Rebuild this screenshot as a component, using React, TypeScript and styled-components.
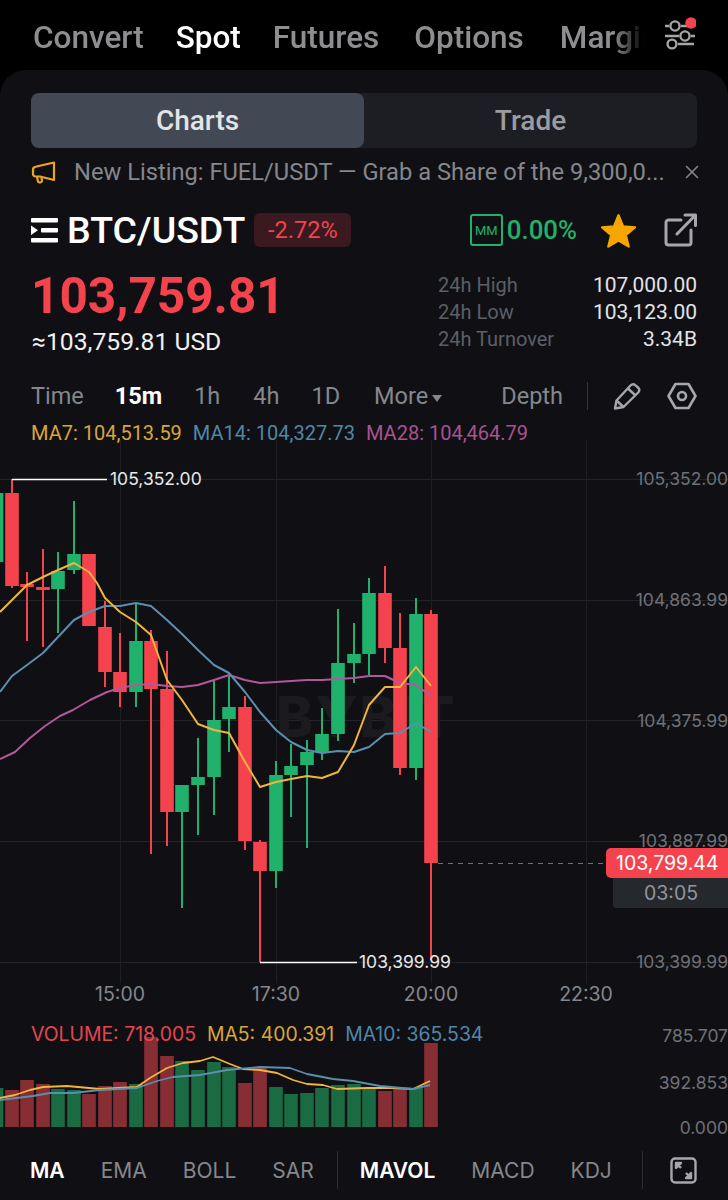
import React from 'react'
import styled, { createGlobalStyle } from 'styled-components'
import { X } from 'lucide-react'

const GlobalStyle = createGlobalStyle`
  html, body {
    margin: 0;
    background: #000;
  }
  * {
    box-sizing: border-box;
  }
`

const UI_FONT = `Roboto, "Liberation Sans", sans-serif`
const CHART_FONT = `Inter, "Liberation Sans", sans-serif`

const Page = styled.div`
  width: 728px;
  height: 1200px;
  overflow: hidden;
  display: flex;
  flex-direction: column;
  background: #000;
  font-family: ${UI_FONT};
`

const TopNav = styled.nav`
  height: 70px;
  flex: none;
  display: flex;
  align-items: center;
  padding: 5px 32px 0 33px;
`

const NavTabs = styled.div`
  width: 611px;
  display: flex;
  overflow: hidden;
  -webkit-mask-image: linear-gradient(to right, #000 95%, transparent 100%);
  mask-image: linear-gradient(to right, #000 95%, transparent 100%);
`

const NavTab = styled.span<{ $active?: boolean; $gap?: number }>`
  flex: none;
  margin-right: ${({ $gap }) => $gap ?? 0}px;
  font-size: 31.5px;
  font-weight: 500;
  line-height: 40px;
  color: ${({ $active }) => ($active ? '#fff' : '#8e8e90')};
`

const NavIcon = styled.svg`
  flex: none;
  margin-left: auto;
  margin-top: -5px;
`

const Card = styled.main`
  flex: 1;
  display: flex;
  flex-direction: column;
  padding: 23px 31px 0;
  background: #101014;
  border-radius: 26px 26px 0 0;
  overflow: hidden;
`

const Segment = styled.div`
  height: 55px;
  flex: none;
  display: grid;
  grid-template-columns: 333px 1fr;
  background: #1c1e23;
  border-radius: 8px;
`

const SegmentItem = styled.div<{ $active?: boolean }>`
  display: flex;
  align-items: center;
  justify-content: center;
  font-size: 28px;
  font-weight: 500;
  border-radius: 8px;
  color: ${({ $active }) => ($active ? '#e2e4e8' : '#9a9ca1')};
  background: ${({ $active }) => ($active ? '#424954' : 'transparent')};
`

const Notice = styled.div`
  height: 48px;
  flex: none;
  display: flex;
  align-items: center;
  font-size: 23.7px;
  color: #85878c;
  svg {
    flex: none;
  }
`

const NoticeText = styled.span`
  margin-left: 18px;
  flex: 1;
  white-space: nowrap;
  overflow: hidden;
`

const CloseIcon = styled(X)`
  margin-right: -6px;
`

const PairRow = styled.div`
  height: 68px;
  flex: none;
  display: flex;
  align-items: center;
`

const PairName = styled.span`
  margin-left: 9px;
  font-size: 37.5px;
  font-weight: 500;
  color: #fff;
`

const ChangeBadge = styled.span`
  margin-left: 9px;
  height: 34px;
  width: 97px;
  display: flex;
  align-items: center;
  justify-content: center;
  font-size: 23.5px;
  color: #ef4450;
  background: #3a1a20;
  border-radius: 6px;
`

const MmBadge = styled.span`
  margin-left: auto;
  width: 33px;
  height: 32px;
  display: flex;
  align-items: center;
  justify-content: center;
  font-size: 13px;
  color: #20b26c;
  border: 2px solid #20b26c;
  border-radius: 3px;
`

const MmRate = styled.span`
  margin-left: 4px;
  font-size: 25.8px;
  font-weight: 500;
  color: #20b26c;
`

const StarIcon = styled.svg`
  margin-left: 23px;
  flex: none;
`

const ShareIcon = styled.svg`
  margin-left: 27px;
  flex: none;
`

const PriceRow = styled.div`
  height: 112px;
  flex: none;
  display: flex;
  justify-content: space-between;
`

const PriceBlock = styled.div`
  display: flex;
  flex-direction: column;
`

const LastPrice = styled.span`
  margin-top: 5px;
  font-size: 49.5px;
  line-height: 54px;
  font-weight: 700;
  color: #f5434e;
`

const FiatPrice = styled.span`
  margin-top: 4px;
  margin-left: 1px;
  font-size: 24.7px;
  line-height: 30px;
  color: #f0f0f2;
`

const Stats = styled.dl`
  width: 259px;
  margin: 7px 0 0;
  display: grid;
  grid-template-columns: auto auto;
  justify-content: space-between;
  grid-auto-rows: 27px;
  align-items: center;
  dt {
    font-size: 20px;
    color: #5c5f66;
  }
  dd {
    margin: 0;
    font-size: 21px;
    text-align: right;
    color: #e2e3e6;
  }
`

const Toolbar = styled.div`
  height: 40px;
  flex: none;
  display: flex;
  align-items: center;
  font-size: 23.5px;
  color: #85878c;
`

const Interval = styled.span<{ $active?: boolean; $gap?: number }>`
  margin-right: ${({ $gap }) => $gap ?? 0}px;
  color: ${({ $active }) => ($active ? '#fff' : '#85878c')};
  font-weight: ${({ $active }) => ($active ? 700 : 400)};
`

const DepthLabel = styled(Interval)`
  margin-left: auto;
`

const Caret = styled.span`
  display: inline-block;
  width: 0;
  height: 0;
  margin-left: 4px;
  vertical-align: 2px;
  border-left: 5px solid transparent;
  border-right: 5px solid transparent;
  border-top: 7px solid #85878c;
`

const ToolDivider = styled.span`
  width: 1px;
  height: 28px;
  margin: 0 25px 0 24px;
  background: #34363b;
`

const ToolIcon = styled.svg`
  flex: none;
`

const HexIcon = styled.svg`
  flex: none;
  margin-left: 26px;
`

const MaLegend = styled.div`
  height: 24px;
  flex: none;
  display: flex;
  align-items: center;
  gap: 11px;
  padding-top: 10px;
  font-family: ${UI_FONT};
  font-size: 20px;
`

const LegendItem = styled.span<{ $color: string }>`
  white-space: nowrap;
  color: ${({ $color }) => $color};
`

const ChartArea = styled.section`
  position: relative;
  height: 700px;
  flex: none;
  margin: 0 -31px;
  font-family: ${CHART_FONT};
`

const ChartSvg = styled.svg`
  display: block;
`

const Watermark = styled.text`
  font-family: ${CHART_FONT};
  font-size: 56px;
  font-weight: 800;
  letter-spacing: 2px;
  fill: #1a1a1f;
`

// page y minus the chart's top edge
const CHART_TOP = 440

const AxisLabel = styled.span<{ $y: number }>`
  position: absolute;
  right: 0;
  top: ${({ $y }) => $y - CHART_TOP - 11}px;
  font-size: 17.5px;
  line-height: 22px;
  color: #6f7177;
`

const MarkLabel = styled.span<{ $x: number; $y: number }>`
  position: absolute;
  left: ${({ $x }) => $x}px;
  top: ${({ $y }) => $y - CHART_TOP - 11}px;
  font-size: 17.5px;
  line-height: 22px;
  color: #e8e8ea;
`

const TimeLabel = styled.span<{ $x: number }>`
  position: absolute;
  left: ${({ $x }) => $x - 40}px;
  top: ${994 - CHART_TOP - 11}px;
  width: 80px;
  text-align: center;
  font-size: 19.5px;
  line-height: 22px;
  color: #85878c;
`

const PriceTag = styled.div`
  position: absolute;
  right: 0;
  top: ${848 - CHART_TOP}px;
  width: 122px;
  height: 30px;
  display: flex;
  align-items: center;
  padding-left: 10px;
  font-size: 19.5px;
  color: #fff;
  background: #f5434e;
  border-radius: 5px 0 0 5px;
`

const Countdown = styled.div`
  position: absolute;
  right: 0;
  top: ${878 - CHART_TOP}px;
  width: 115px;
  height: 30px;
  display: flex;
  align-items: center;
  padding-left: 31px;
  font-size: 19.5px;
  color: #93959a;
  background: #25282d;
  border-radius: 0 0 0 4px;
`

const VolumeLegend = styled.div`
  position: absolute;
  left: 31px;
  top: ${1034 - CHART_TOP - 11}px;
  display: flex;
  gap: 11px;
  font-size: 19.4px;
  line-height: 22px;
`

const BottomTabs = styled.div`
  height: 60px;
  flex: none;
  display: flex;
  align-items: center;
  margin: 0 -1px;
  font-family: ${CHART_FONT};
  font-size: 21px;
`

const BottomTab = styled.span<{ $active?: boolean }>`
  flex: none;
  margin-right: 36px;
  color: ${({ $active }) => ($active ? '#fff' : '#85878c')};
  font-weight: ${({ $active }) => ($active ? 600 : 400)};
`

const TabDivider = styled.span<{ $left: number }>`
  flex: none;
  width: 1px;
  height: 38px;
  margin: 0 22px 0 ${({ $left }) => $left}px;
  background: #2a2c31;
`

const ExpandIcon = styled.svg`
  flex: none;
  margin-left: 5px;
`

const GREEN = '#20b26c'
const RED = '#f5434e'

// x, wick top, body top, body bottom, wick bottom, side (page coordinates)
const candles: [number, number, number, number, number, 'g' | 'r'][] = [
  [-3.5, 493, 493, 562, 562, 'g'],
  [12, 479, 493, 586, 588, 'r'],
  [27, 572, 584, 587, 641, 'r'],
  [43, 549, 587, 590, 647, 'r'],
  [58, 552, 571, 589, 633, 'g'],
  [74, 501, 554, 570, 574, 'g'],
  [89, 554, 554, 626, 626, 'r'],
  [105, 601, 627, 672, 687, 'r'],
  [120, 633, 672, 692, 707, 'r'],
  [136, 603, 641, 692, 707, 'g'],
  [151, 630, 641, 689, 854, 'r'],
  [167, 651, 689, 812, 846, 'r'],
  [182, 785, 785, 812, 908, 'g'],
  [198, 738, 777, 785, 835, 'g'],
  [214, 680, 720, 777, 815, 'g'],
  [229, 675, 707, 719, 752, 'g'],
  [245, 696, 707, 841, 850, 'r'],
  [260, 840, 842, 871, 962, 'r'],
  [276, 761, 775, 871, 888, 'g'],
  [291, 744, 766, 775, 817, 'g'],
  [307, 740, 752, 765, 848, 'g'],
  [322, 708, 734, 752, 760, 'g'],
  [338, 609, 663, 734, 741, 'g'],
  [354, 623, 654, 663, 683, 'g'],
  [369, 578, 593, 654, 675, 'g'],
  [385, 566, 593, 648, 663, 'r'],
  [400, 613, 648, 768, 775, 'r'],
  [416, 598, 614, 768, 780, 'g'],
  [431, 610, 614, 863, 960, 'r'],
]

const ma7 = '0,612 27,585 43,577 58,570 74,563 89,572 97,583 105,598 120,612 136,622 151,635 167,680 182,700 198,724 214,730 229,733 245,762 260,787 276,782 291,779 307,776 322,778 338,772 354,745 369,705 385,687 400,687 416,667 431,686'
const ma14 = '0,692 12,676 27,665 43,653 58,637 74,620 89,612 105,606 120,606 136,603 151,606 167,620 182,634 198,650 214,665 229,673 245,692 260,712 276,730 291,742 307,750 322,753 338,751 354,752 369,747 385,734 400,733 416,723 431,732'
const ma28 = '0,759 15,752 30,738 45,726 60,716 73,710 90,700 107,692 120,688 136,685 151,684 167,686 182,687 198,685 214,680 229,675 245,680 260,683 276,682 291,681 307,680 322,680 338,679 354,678 369,676 385,676 400,683 416,685 431,696'

// x, top of bar, side
const volumes: [number, number, 'g' | 'r'][] = [
  [-3.5, 1088, 'g'], [12, 1090, 'r'], [27, 1080, 'r'], [43, 1084, 'r'], [58, 1089, 'g'],
  [74, 1090, 'g'], [89, 1094, 'r'], [105, 1086, 'r'], [120, 1082, 'r'], [136, 1084, 'g'],
  [151, 1037, 'r'], [167, 1056, 'r'], [182, 1061, 'g'], [198, 1070, 'g'], [214, 1062, 'g'],
  [229, 1067, 'g'], [245, 1083, 'r'], [260, 1068, 'r'], [276, 1087, 'g'], [291, 1094, 'g'],
  [307, 1093, 'g'], [322, 1088, 'g'], [338, 1085, 'g'], [354, 1084, 'g'], [369, 1089, 'g'],
  [385, 1091, 'r'], [400, 1088, 'r'], [416, 1088, 'g'], [431, 1043, 'r'],
]

const volMa5 = '0,1098 15,1095 30,1090 43,1087 67,1086 100,1089 137,1087 150,1078 167,1068 183,1063 200,1061 213,1057 230,1064 243,1069 260,1070 277,1073 293,1080 307,1084 323,1085 337,1089 367,1088 393,1088 413,1089 430,1081'
const volMa10 = '0,1100 33,1096 50,1093 73,1093 100,1090 137,1088 157,1081 173,1077 200,1075 227,1070 260,1067 290,1068 307,1074 333,1079 353,1081 380,1086 413,1089 430,1085'

const gridY = [479, 600, 720, 841, 962]
const gridX = [120, 276, 431, 586]

const Candle = ({ c }: { c: (typeof candles)[number] }) => {
  const [x, hi, top, bottom, lo, side] = c
  const color = side === 'g' ? GREEN : RED
  return (
    <g fill={color}>
      <rect x={x - 1} y={hi} width={2} height={lo - hi} />
      <rect x={x - 6.8} y={top} width={13.6} height={bottom - top} />
    </g>
  )
}

const Chart = () => (
  <ChartSvg width={728} height={700} viewBox={`0 ${CHART_TOP} 728 700`}>
    {gridY.map(y => (
      <line key={y} x1={0} x2={728} y1={y + 0.5} y2={y + 0.5} stroke="#232428" />
    ))}
    {gridX.map(x => (
      <line key={x} x1={x + 0.5} x2={x + 0.5} y1={440} y2={983} stroke="#1f2024" />
    ))}
    <Watermark x={276} y={737}>BYBIT</Watermark>
    {candles.map(c => (
      <Candle key={c[0]} c={c} />
    ))}
    <g fill="none" strokeWidth={2} strokeLinejoin="round">
      <polyline points={ma28} stroke="#b3579b" />
      <polyline points={ma14} stroke="#5b8fae" />
      <polyline points={ma7} stroke="#f0b53c" />
    </g>
    <path d="M12 479.5H107M260 962.5H357" stroke="#fff" strokeWidth={1.6} fill="none" />
    <line x1={438} x2={606} y1={863.5} y2={863.5} stroke="#6f7177" strokeDasharray="5 5" />
    {volumes.map(([x, top, side]) => (
      <rect key={x} x={x - 6.8} y={top} width={13.6} height={1127 - top} fill={side === 'g' ? '#1a6a44' : '#872e35'} />
    ))}
    <g fill="none" strokeWidth={1.8} strokeLinejoin="round">
      <polyline points={volMa5} stroke="#f0b53c" />
      <polyline points={volMa10} stroke="#5b8fae" />
    </g>
  </ChartSvg>
)

const App: React.FC = () => (
  <Page>
    <GlobalStyle />
    <TopNav>
      <NavTabs>
        <NavTab $gap={32}>Convert</NavTab>
        <NavTab $active $gap={32}>Spot</NavTab>
        <NavTab $gap={35}>Futures</NavTab>
        <NavTab $gap={36}>Options</NavTab>
        <NavTab>Margin</NavTab>
      </NavTabs>
      <NavIcon width={34} height={38} viewBox="662 16 34 38" fill="none" stroke="#a5a5a7" strokeWidth={2.4}>
        <path d="M665 26h4M681 26h10M665 36h14M691 36h4M678 44h16" />
        <circle cx={675} cy={26} r={4.6} />
        <circle cx={685} cy={36} r={4.6} />
        <circle cx={672} cy={44} r={4.4} />
        <circle cx={691} cy={23} r={5.8} fill="#f5434e" stroke="none" />
      </NavIcon>
    </TopNav>
    <Card>
      <Segment>
        <SegmentItem $active>Charts</SegmentItem>
        <SegmentItem>Trade</SegmentItem>
      </Segment>
      <Notice>
        <svg width={25} height={25} viewBox="0 0 25 25" fill="none" stroke="#eda51e" strokeWidth={2.2} strokeLinejoin="round">
          <path d="M23 2.500v17.500L9 16.500H4.500c-1.500 0-2.500-1-2.500-2.500V9.500C2 8 3 7 4.500 6.800z" />
          <path d="M6 16.500l1 5c.3 1.500 4.500 1 4-1l-.6-3" />
        </svg>
        <NoticeText>New Listing: FUEL/USDT — Grab a Share of the 9,300,0...</NoticeText>
        <CloseIcon size={22} color="#85878c" strokeWidth={1.7} />
      </Notice>
      <PairRow>
        <svg width={27} height={27} viewBox="0 0 27 27" fill="#fff">
          <rect y={1} width={27} height={4.5} rx={1} />
          <rect x={10} y={11} width={17} height={4.5} rx={1} />
          <rect y={21} width={27} height={4.5} rx={1} />
          <path d="M0 8.500l7 4.800-7 4.800z" />
        </svg>
        <PairName>BTC/USDT</PairName>
        <ChangeBadge>-2.72%</ChangeBadge>
        <MmBadge>MM</MmBadge>
        <MmRate>0.00%</MmRate>
        <StarIcon width={37} height={35} viewBox="0 0 24 23" fill="#f7a600" stroke="#f7a600" strokeWidth={1.5} strokeLinejoin="round">
          <path d="M12 1.500l3 7.300 7.800.6-6 5.100 1.900 7.600L12 18.100l-6.700 4 1.900-7.600-6-5.100L9 8.800z" />
        </StarIcon>
        <ShareIcon width={33} height={34} viewBox="0 0 33 34" fill="none" stroke="#a5a7ac" strokeWidth={3} strokeLinecap="round" strokeLinejoin="round">
          <path d="M17 7H4.500A2.500 2.500 0 0 0 2 9.500v20A2.500 2.500 0 0 0 4.500 32h20a2.500 2.500 0 0 0 2.500-2.500V17" />
          <path d="M13 21L31 2.500M21 2h10.500v10.500" />
        </ShareIcon>
      </PairRow>
      <PriceRow>
        <PriceBlock>
          <LastPrice>103,759.81</LastPrice>
          <FiatPrice>≈103,759.81 USD</FiatPrice>
        </PriceBlock>
        <Stats>
          <dt>24h High</dt>
          <dd>107,000.00</dd>
          <dt>24h Low</dt>
          <dd>103,123.00</dd>
          <dt>24h Turnover</dt>
          <dd>3.34B</dd>
        </Stats>
      </PriceRow>
      <Toolbar>
        <Interval $gap={31}>Time</Interval>
        <Interval $active $gap={32}>15m</Interval>
        <Interval $gap={33}>1h</Interval>
        <Interval $gap={32}>4h</Interval>
        <Interval $gap={34}>1D</Interval>
        <Interval>More<Caret /></Interval>
        <DepthLabel>Depth</DepthLabel>
        <ToolDivider />
        <ToolIcon width={28} height={28} viewBox="0 0 28 28" fill="none" stroke="#a5a7ac" strokeWidth={2.4} strokeLinejoin="round">
          <path d="M2 26.500l1.500-8L17.500 3.500c1.500-1.500 3.500-1.500 5-.2l2.500 2.200c1.500 1.400 1.500 3.500.2 5L10.500 25z" />
          <path d="M15 6.500l7.500 7M3.500 18.500l7 6.500" />
        </ToolIcon>
        <HexIcon width={30} height={28} viewBox="0 0 30 28" fill="none" stroke="#a5a7ac" strokeWidth={2.6} strokeLinejoin="round">
          <path d="M8.500 2h13L28.500 14l-7 12h-13L1.500 14z" />
          <circle cx={15} cy={14} r={4} />
        </HexIcon>
      </Toolbar>
      <MaLegend>
        <LegendItem $color="#d9a63a">MA7: 104,513.59</LegendItem>
        <LegendItem $color="#4f87a8">MA14: 104,327.73</LegendItem>
        <LegendItem $color="#a9528f">MA28: 104,464.79</LegendItem>
      </MaLegend>
      <ChartArea>
        <Chart />
        <AxisLabel $y={479}>105,352.00</AxisLabel>
        <AxisLabel $y={600}>104,863.99</AxisLabel>
        <AxisLabel $y={721}>104,375.99</AxisLabel>
        <AxisLabel $y={841}>103,887.99</AxisLabel>
        <AxisLabel $y={962}>103,399.99</AxisLabel>
        <AxisLabel $y={1036}>785.707</AxisLabel>
        <AxisLabel $y={1083}>392.853</AxisLabel>
        <AxisLabel $y={1128}>0.000</AxisLabel>
        <MarkLabel $x={110} $y={479}>105,352.00</MarkLabel>
        <MarkLabel $x={359} $y={962}>103,399.99</MarkLabel>
        <PriceTag>103,799.44</PriceTag>
        <Countdown>03:05</Countdown>
        <TimeLabel $x={120}>15:00</TimeLabel>
        <TimeLabel $x={276}>17:30</TimeLabel>
        <TimeLabel $x={431}>20:00</TimeLabel>
        <TimeLabel $x={586}>22:30</TimeLabel>
        <VolumeLegend>
          <LegendItem $color="#e5464f">VOLUME: 718.005</LegendItem>
          <LegendItem $color="#d9a63a">MA5: 400.391</LegendItem>
          <LegendItem $color="#4f87a8">MA10: 365.534</LegendItem>
        </VolumeLegend>
      </ChartArea>
      <BottomTabs>
        <BottomTab $active>MA</BottomTab>
        <BottomTab>EMA</BottomTab>
        <BottomTab>BOLL</BottomTab>
        <BottomTab>SAR</BottomTab>
        <TabDivider $left={-13} />
        <BottomTab $active>MAVOL</BottomTab>
        <BottomTab>MACD</BottomTab>
        <BottomTab>KDJ</BottomTab>
        <TabDivider $left={-6} />
        <ExpandIcon width={27} height={27} viewBox="0 0 27 27" fill="none" stroke="#a5a7ac" strokeWidth={2.4} strokeLinejoin="round">
          <rect x={1.5} y={1.5} width={24} height={24} rx={3.5} />
          <path d="M6 11V6h5zM6 6l5 5M21 16v5h-5zM21 21l-5-5" />
        </ExpandIcon>
      </BottomTabs>
    </Card>
  </Page>
)

export default App
